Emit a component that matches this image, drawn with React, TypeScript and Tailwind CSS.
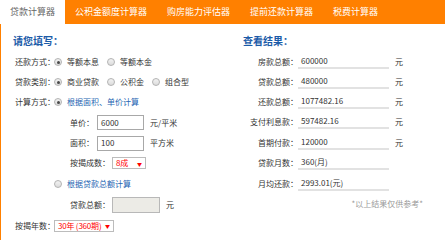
import React from "react"

const tabs = ["贷款计算器", "公积金额度计算器", "购房能力评估器", "提前还款计算器", "税费计算器"]

const results = [
  { label: "房款总额：", value: "600000", unit: true, h: "h-[20px]" },
  { label: "贷款总额：", value: "480000", unit: true, h: "h-[20px]" },
  { label: "还款总额：", value: "1077482.16", unit: true, h: "h-[20px]" },
  { label: "支付利息款：", value: "597482.16", unit: true, h: "h-[20px]" },
  { label: "首期付款：", value: "120000", unit: true, h: "h-[21px]" },
  { label: "贷款月数：", value: "360(月)", unit: false, h: "h-[20px]" },
  { label: "月均还款：", value: "2993.01(元)", unit: false, h: "h-[21px]" },
]

function Radio({ on }: { on?: boolean }) {
  return (
    <span className="flex h-[8px] w-[8px] shrink-0 items-center justify-center rounded-full border border-[#b3b3b3] bg-gradient-to-b from-[#f2f2f2] to-[#dcdcdc]">
      {on && <span className="h-[3px] w-[3px] rounded-full bg-[#4a4a4a]" />}
    </span>
  )
}

function Option({ on, text }: { on?: boolean; text: string }) {
  return (
    <span className="mr-[8px] flex items-center">
      <Radio on={on} />
      <span className="ml-[5px]">{text}</span>
    </span>
  )
}

function Select({ text, width }: { text: string; width: string }) {
  return (
    <div className={`flex h-[12px] items-center justify-between whitespace-nowrap border border-[#bcbcbc] bg-white pl-[3px] pr-[3px] leading-none text-[#f00] ${width}`}>
      <span className="tracking-[-0.2px]">{text}</span>
      <span className="text-[5px]">▼</span>
    </div>
  )
}

export default function App() {
  return (
    <div className="h-[240px] w-[445px] overflow-hidden bg-white font-['Noto_Sans_CJK_SC','Liberation_Sans',sans-serif] text-[8px] text-[#333]">
      <div className="flex h-[24px] bg-[#ff8000] text-[9px] leading-[24px]">
        {tabs.map((t, i) => (
          <div key={t} className={i === 0 ? "bg-white px-[10px] text-[#666]" : "px-[10px] text-white"}>
            {t}
          </div>
        ))}
      </div>

      <div className="flex h-[216px] border-l border-[#ff8000]">
        {/* left: inputs */}
        <div className="w-[228px]">
          <div className="mb-[4px] mt-[10px] h-[14px] pl-[12px] text-[10px] font-bold leading-[14px] text-[#1b5ba8]">请您填写：</div>
          <div className="pl-[14px]">
            <div className="flex h-[20px] items-center">
              <span className="w-[39px] whitespace-nowrap">还款方式：</span>
              <Option on text="等额本息" />
              <Option text="等额本金" />
            </div>
            <div className="flex h-[20px] items-center">
              <span className="w-[39px] whitespace-nowrap">贷款类别：</span>
              <Option on text="商业贷款" />
              <Option text="公积金" />
              <Option text="组合型" />
            </div>
            <div className="flex h-[20px] items-center">
              <span className="w-[39px] whitespace-nowrap">计算方式：</span>
              <Radio on />
              <span className="ml-[5px] text-[#2565b2]">根据面积、单价计算</span>
            </div>
            <div className="flex h-[21px] items-center pl-[55px]">
              <span className="w-[27px]">单价：</span>
              <div className="flex h-[15px] w-[47px] items-center border border-[#a8a8a8] pl-[3px]">6000</div>
              <span className="ml-[6px]">元/平米</span>
            </div>
            <div className="flex h-[20px] items-center pl-[55px]">
              <span className="w-[27px]">面积：</span>
              <div className="flex h-[15px] w-[47px] items-center border border-[#a8a8a8] pl-[3px]">100</div>
              <span className="ml-[6px]">平方米</span>
            </div>
            <div className="flex h-[20px] items-center pl-[55px]">
              <span className="w-[42px] whitespace-nowrap">按揭成数：</span>
              <Select text="8成" width="w-[34px]" />
            </div>
            <div className="flex h-[21px] items-center pl-[39px]">
              <Radio />
              <span className="ml-[5px] text-[#2565b2]">根据贷款总额计算</span>
            </div>
            <div className="flex h-[21px] items-center pl-[55px]">
              <span className="w-[42px] whitespace-nowrap">贷款总额：</span>
              <div className="h-[16px] w-[48px] border border-[#b8b8b8] bg-[#ecebe6]" />
              <span className="ml-[6px]">元</span>
            </div>
            <div className="flex h-[21px] items-center">
              <span className="w-[39px] whitespace-nowrap">按揭年数：</span>
              <Select text="30年 (360期)" width="w-[60px]" />
            </div>
          </div>
        </div>

        {/* right: results */}
        <div className="flex-1">
          <div className="mb-[4px] mt-[10px] h-[14px] pl-[14px] text-[10px] font-bold leading-[14px] text-[#1b5ba8]">查看结果：</div>
          {results.map((r) => (
            <div key={r.label} className={`flex items-center ${r.h}`}>
              <span className="w-[69px] whitespace-nowrap text-right">{r.label}</span>
              <div className="w-[91px] border-b-2 border-[#e2e2e2] pl-[3px] leading-[12px]">{r.value}</div>
              {r.unit && <span className="ml-[6px]">元</span>}
            </div>
          ))}
          <div className="flex h-[20px] items-center justify-end pr-[22px] text-[#9a9a9a]">*以上结果仅供参考*</div>
        </div>
      </div>
    </div>
  )
}
